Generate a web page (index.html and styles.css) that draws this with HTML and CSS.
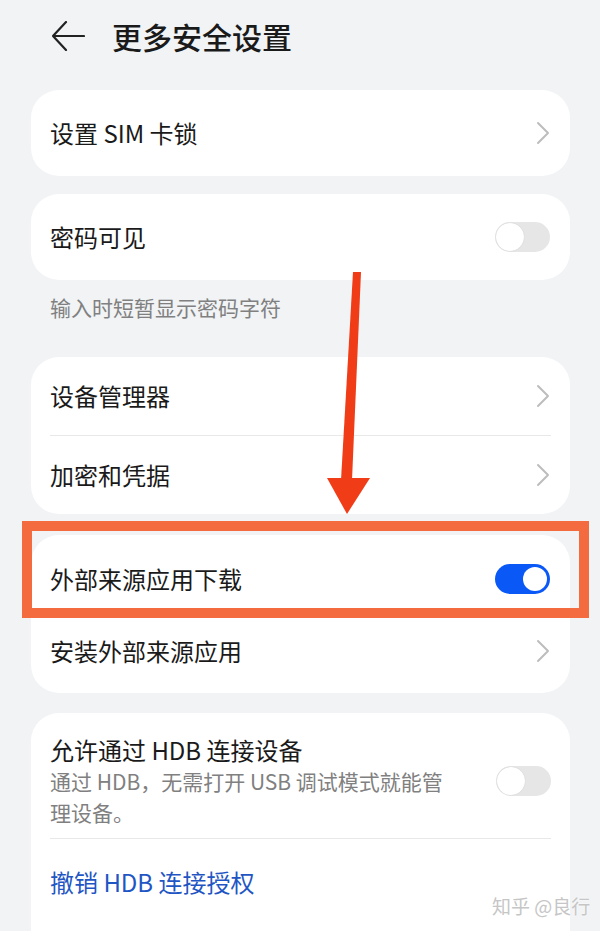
FILE: index.html
```html
<!DOCTYPE html>
<html>

<head>
    <meta charset="UTF-8">
    <title>更多安全设置</title>
    <link rel="stylesheet" href="styles.css">
</head>

<body>
    <div class="page">
        <div class="header">
            <svg class="back" width="34" height="30" viewBox="0 0 34 30">
                <path d="M15 1 L2 15 L15 29 M2 15 L33 15" fill="none" stroke="#222" stroke-width="2.2" stroke-linecap="round" stroke-linejoin="round" />
            </svg>
            <h1>更多安全设置</h1>
        </div>

        <div class="list">
            <div class="card">
                <div class="row">
                    <span class="label">设置 SIM 卡锁</span>
                    <svg class="chev" width="14" height="24" viewBox="0 0 14 24">
                        <path d="M2 2 L12 12 L2 22" fill="none" stroke="#bdbdbd" stroke-width="2" stroke-linecap="round" stroke-linejoin="round" />
                    </svg>
                </div>
            </div>

            <div class="card">
                <div class="row">
                    <span class="label">密码可见</span>
                    <span class="switch"><i></i></span>
                </div>
            </div>
            <p class="note">输入时短暂显示密码字符</p>

            <div class="card card-two">
                <div class="row row-m">
                    <span class="label">设备管理器</span>
                    <svg class="chev" width="14" height="24" viewBox="0 0 14 24">
                        <path d="M2 2 L12 12 L2 22" fill="none" stroke="#bdbdbd" stroke-width="2" stroke-linecap="round" stroke-linejoin="round" />
                    </svg>
                </div>
                <div class="line"></div>
                <div class="row row-m">
                    <span class="label">加密和凭据</span>
                    <svg class="chev" width="14" height="24" viewBox="0 0 14 24">
                        <path d="M2 2 L12 12 L2 22" fill="none" stroke="#bdbdbd" stroke-width="2" stroke-linecap="round" stroke-linejoin="round" />
                    </svg>
                </div>
            </div>

            <div class="card card-ext">
                <div class="row row-s">
                    <span class="label">外部来源应用下载</span>
                    <span class="switch on"><i></i></span>
                </div>
                <div class="row row-s">
                    <span class="label">安装外部来源应用</span>
                    <svg class="chev" width="14" height="24" viewBox="0 0 14 24">
                        <path d="M2 2 L12 12 L2 22" fill="none" stroke="#bdbdbd" stroke-width="2" stroke-linecap="round" stroke-linejoin="round" />
                    </svg>
                </div>
            </div>

            <div class="card card-hdb">
                <div class="row-hdb">
                    <div class="texts">
                        <div class="label">允许通过 HDB 连接设备</div>
                        <div class="sub">通过 HDB，无需打开 USB 调试模式就能管理设备。</div>
                    </div>
                    <span class="switch"><i></i></span>
                </div>
                <div class="line"></div>
                <div class="row row-link">
                    <span class="label link">撤销 HDB 连接授权</span>
                </div>
            </div>
        </div>

        <!-- 标注 -->
        <svg class="arrow" width="60" height="250" viewBox="0 0 60 250">
            <polygon points="33,0 41,0 32,208 21,208" fill="#f03c17" />
            <polygon points="7,206 50,206 27,242" fill="#f03c17" />
        </svg>
        <div class="mark"></div>
        <span class="wm">知乎 @良行</span>
    </div>
</body>

</html>
```

FILE: styles.css
```css
* {
    margin: 0;
    padding: 0;
}

body {
    background-color: #f1f3f5;
    font-family: "Noto Sans CJK SC", "Noto Sans", sans-serif;
    color: #1a1a1a;
}

.page {
    width: 600px;
    height: 931px;
    position: relative;
    overflow: hidden;
}

.header {
    height: 72px;
    display: flex;
    align-items: center;
    padding-left: 51px;
}

.header .back {
    margin-right: 27px;
}

.header h1 {
    font-size: 30px;
    font-weight: 500;
    line-height: 40px;
    color: #1a1a1a;
}

.list {
    padding: 18px 30px 0 31px;
}

.card {
    background-color: #fff;
    border-radius: 28px;
    margin-bottom: 18px;
}

.row {
    height: 86px;
    display: flex;
    align-items: center;
    justify-content: space-between;
    padding: 0 20px 0 19px;
}

.label {
    font-size: 24px;
    line-height: 32px;
}

.note {
    font-size: 21px;
    line-height: 30px;
    color: #808080;
    padding: 0 19px;
    margin: -6px 0 35px;
}

.card-two {
    margin-bottom: 21px;
}

.row-m {
    height: 78px;
}

.line {
    height: 1px;
    background-color: #e8e8e8;
    margin: 0 19px;
}

.card-ext {
    padding: 8px 0 6px;
    margin-bottom: 20px;
}

.row-s {
    height: 72px;
}

.switch {
    width: 55px;
    height: 30px;
    border-radius: 15px;
    background-color: #e6e6e6;
    display: flex;
    align-items: center;
    padding: 0 1px;
    box-sizing: border-box;
}

.switch i {
    width: 28px;
    height: 28px;
    border-radius: 50%;
    background-color: #fff;
    box-shadow: 0 0 1px #bbb;
}

.switch.on {
    background-color: #0a59f7;
    justify-content: flex-end;
    padding: 0 3px;
}

.switch.on i {
    width: 24px;
    height: 24px;
    box-shadow: none;
}

.card-hdb {
    padding-top: 21px;
    height: 240px;
}

.row-hdb {
    display: flex;
    align-items: center;
    justify-content: space-between;
    padding: 0 19px 10px 19px;
}

.texts {
    width: 405px;
}

.sub {
    font-size: 21px;
    line-height: 31px;
    color: #808080;
}

.row-link {
    height: 86px;
    padding-bottom: 2px;
}

.link {
    color: #1f56c4;
}

.arrow {
    position: absolute;
    left: 320px;
    top: 272px;
}

.mark {
    position: absolute;
    left: 22px;
    top: 521px;
    width: 567px;
    height: 97px;
    border: 10px solid #f36b3f;
    box-sizing: border-box;
}

.wm {
    position: absolute;
    left: 492px;
    top: 892px;
    font-size: 19px;
    line-height: 28px;
    color: #c6c6c6;
    text-shadow: 0 0 2px #fff;
}
```
